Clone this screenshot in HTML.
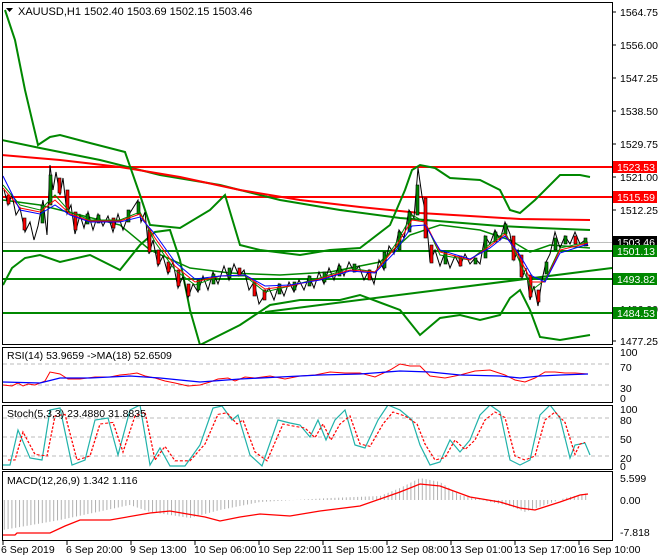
<!DOCTYPE html>
<html><head><meta charset="utf-8"><style>
html,body{margin:0;padding:0;background:#fff;}
svg{display:block;font-family:"Liberation Sans",sans-serif;}
</style></head><body>
<svg width="660" height="560" xmlns="http://www.w3.org/2000/svg">
<defs>
<clipPath id="cm"><rect x="3" y="3" width="609" height="341"/></clipPath>
<clipPath id="cr"><rect x="3" y="348" width="609" height="54"/></clipPath>
<clipPath id="cs"><rect x="3" y="406" width="609" height="63"/></clipPath>
<clipPath id="cd"><rect x="3" y="472" width="609" height="68"/></clipPath>
<pattern id="hp" width="3.8" height="10" patternUnits="userSpaceOnUse"><rect x="0" y="0" width="1" height="10" fill="#b0b0b0"/></pattern>
</defs>
<rect width="660" height="560" fill="#fff"/>
<rect x="2.5" y="2.5" width="610" height="342" fill="none" stroke="#000"/>
<rect x="2.5" y="347.5" width="610" height="55" fill="none" stroke="#000"/>
<rect x="2.5" y="405.5" width="610" height="64" fill="none" stroke="#000"/>
<rect x="2.5" y="471.5" width="610" height="69" fill="none" stroke="#000"/>

<g clip-path="url(#cm)" fill="none">
<line x1="3" x2="612" y1="242.5" y2="242.5" stroke="#c0c0c0"/>
<line x1="3" x2="612" y1="167" y2="167" stroke="#f00" stroke-width="2"/>
<line x1="3" x2="612" y1="197" y2="197" stroke="#f00" stroke-width="2"/>
<line x1="3" x2="612" y1="251" y2="251" stroke="#080" stroke-width="2"/>
<line x1="3" x2="612" y1="279" y2="279" stroke="#080" stroke-width="2"/>
<line x1="3" x2="612" y1="313" y2="313" stroke="#080" stroke-width="2"/>
<line x1="265" y1="312" x2="612" y2="268" stroke="#080" stroke-width="2"/>
<polyline stroke="#080" stroke-width="2" points="2,140 40,148 100,160 160,175 220,185 280,200 340,210 400,218 450,222 500,226 540,228 590,230"/>
<polyline stroke="#f00" stroke-width="2" points="2,155 60,160 120,167 180,177 240,190 300,200 360,207 420,213 470,216 520,219 590,220"/>
<polyline stroke="#080" stroke-width="2" points="5,10 15,40 25,90 38,145 50,137 60,135 90,143 125,152 140,195 150,225 180,228 210,210 225,195 240,245 260,250 300,255 330,250 360,248 390,225 405,190 412,170 420,165 435,168 450,178 480,180 500,190 510,210 520,213 535,200 560,175 580,175 590,177"/>
<polyline stroke="#080" stroke-width="2" points="3,285 12,268 25,258 40,255 60,262 90,255 120,270 140,245 155,232 170,230 180,260 190,310 200,345 240,325 270,305 300,300 340,300 360,295 400,310 420,335 440,318 460,315 480,320 500,315 510,298 520,290 530,310 540,337 560,340 590,335"/>
<polyline stroke="#080" stroke-width="1.5" points="3,200 40,205 80,215 120,225 150,250 190,268 230,273 280,275 330,272 380,262 410,235 440,225 480,230 510,240 530,252 550,245 590,248"/>
<polyline stroke="#000" stroke-width="1" points="4,190 8,205 12,195 16,215 20,208 25,232 30,222 34,240 38,226 43,200 47,235 50,165 53,190 56,172 60,195 63,178 67,214 71,205 75,234 80,215 84,228 88,212 93,230 98,214 103,226 108,216 113,232 118,214 123,230 128,216 133,208 138,200 141,222 145,212 149,254 153,240 158,266 163,256 168,274 173,262 178,288 183,276 188,298 193,284 198,292 203,276 208,290 213,272 218,284 224,266 229,280 234,264 239,276 244,270 249,290 254,282 259,304 264,296 269,288 274,300 279,284 284,296 289,282 294,292 299,280 304,290 309,276 314,288 319,272 324,284 329,268 334,280 339,264 344,276 349,262 354,272 359,266 364,280 369,270 374,284 379,260 384,270 389,246 394,254 399,230 404,238 409,210 414,218 418,168 422,196 426,214 430,262 435,250 440,266 445,252 450,268 455,256 460,266 465,254 470,264 475,258 480,264 485,236 490,244 495,230 500,240 505,222 510,234 514,260 518,250 522,278 526,268 530,300 534,286 538,306 542,280 546,262 550,254 555,232 560,248 565,236 570,244 575,232 580,244 585,240 588,246"/>
<g stroke="#000" stroke-width="0.6">
<rect x="7" y="195" width="3" height="9" fill="#f00"/><rect x="23" y="218" width="3" height="12" fill="#f00"/><rect x="41" y="205" width="3" height="18" fill="#080"/><rect x="49" y="175" width="3" height="30" fill="#080"/><rect x="58" y="178" width="3" height="15" fill="#f00"/><rect x="66" y="190" width="3" height="20" fill="#f00"/><rect x="74" y="212" width="3" height="18" fill="#f00"/><rect x="86" y="214" width="3" height="10" fill="#080"/><rect x="97" y="215" width="3" height="8" fill="#080"/><rect x="112" y="218" width="3" height="10" fill="#f00"/><rect x="127" y="210" width="3" height="12" fill="#080"/><rect x="137" y="202" width="3" height="12" fill="#080"/><rect x="148" y="230" width="3" height="22" fill="#f00"/><rect x="157" y="250" width="3" height="14" fill="#f00"/><rect x="167" y="262" width="3" height="10" fill="#f00"/><rect x="177" y="270" width="3" height="16" fill="#f00"/><rect x="187" y="284" width="3" height="12" fill="#f00"/><rect x="197" y="280" width="3" height="10" fill="#080"/><rect x="212" y="274" width="3" height="10" fill="#080"/><rect x="228" y="268" width="3" height="10" fill="#080"/><rect x="238" y="268" width="3" height="8" fill="#f00"/><rect x="253" y="282" width="3" height="14" fill="#f00"/><rect x="263" y="290" width="3" height="10" fill="#f00"/><rect x="278" y="284" width="3" height="10" fill="#080"/><rect x="293" y="282" width="3" height="8" fill="#080"/><rect x="308" y="276" width="3" height="10" fill="#080"/><rect x="323" y="272" width="3" height="10" fill="#080"/><rect x="338" y="266" width="3" height="10" fill="#080"/><rect x="353" y="264" width="3" height="8" fill="#080"/><rect x="368" y="270" width="3" height="10" fill="#f00"/><rect x="383" y="252" width="3" height="16" fill="#080"/><rect x="398" y="232" width="3" height="18" fill="#080"/><rect x="408" y="212" width="3" height="20" fill="#080"/><rect x="416" y="185" width="3" height="30" fill="#080"/><rect x="424" y="198" width="3" height="40" fill="#f00"/><rect x="430" y="245" width="3" height="18" fill="#f00"/><rect x="444" y="252" width="3" height="12" fill="#080"/><rect x="459" y="256" width="3" height="10" fill="#f00"/><rect x="474" y="258" width="3" height="6" fill="#080"/><rect x="484" y="236" width="3" height="22" fill="#080"/><rect x="494" y="232" width="3" height="10" fill="#080"/><rect x="504" y="224" width="3" height="10" fill="#080"/><rect x="512" y="236" width="3" height="24" fill="#f00"/><rect x="520" y="255" width="3" height="22" fill="#f00"/><rect x="529" y="275" width="3" height="22" fill="#f00"/><rect x="537" y="290" width="3" height="12" fill="#f00"/><rect x="545" y="262" width="3" height="12" fill="#080"/><rect x="554" y="238" width="3" height="12" fill="#080"/><rect x="564" y="236" width="3" height="8" fill="#080"/><rect x="574" y="236" width="3" height="8" fill="#f00"/><rect x="584" y="238" width="3" height="8" fill="#080"/>
</g>
<polyline stroke="#080" stroke-width="1" points="3,185 20,205 40,210 55,195 70,212 90,220 120,220 140,212 155,242 175,270 195,285 220,276 245,276 265,292 290,286 320,278 350,268 375,272 395,245 412,215 425,222 440,255 470,260 490,244 505,232 518,258 532,290 545,280 560,248 588,242"/>
<polyline stroke="#f00" stroke-width="1" points="3,188 20,208 40,212 55,200 70,214 90,221 120,221 140,214 155,238 175,266 195,282 220,276 245,275 265,289 290,286 320,279 350,270 375,272 395,248 412,220 425,222 440,252 470,260 490,246 505,234 518,255 532,282 545,282 560,250 588,243"/>
<polyline stroke="#00f" stroke-width="1" points="3,176 20,210 40,214 55,205 70,215 90,222 120,222 140,217 155,234 175,262 195,279 220,276 245,275 265,286 290,285 320,280 350,271 375,273 395,252 412,226 425,225 440,250 470,259 490,248 505,236 518,252 532,276 545,282 560,253 588,244"/>
</g>
<path d="M6 8 L13 8 L9.5 12 Z" fill="#000"/>
<text x="18" y="15" font-size="11" fill="#000">XAUUSD,H1  1502.40 1503.69 1502.15 1503.46</text>

<g font-size="10.5" fill="#000" stroke="#000">
<line x1="612" x2="616" y1="12" y2="12"/><line x1="612" x2="616" y1="45" y2="45"/><line x1="612" x2="616" y1="78" y2="78"/><line x1="612" x2="616" y1="111" y2="111"/><line x1="612" x2="616" y1="144" y2="144"/><line x1="612" x2="616" y1="177" y2="177"/><line x1="612" x2="616" y1="210" y2="210"/><line x1="612" x2="616" y1="309" y2="309"/><line x1="612" x2="616" y1="341" y2="341"/>
</g>
<g font-size="10.5" fill="#000">
<text x="620" y="16">1564.75</text><text x="620" y="49">1556.00</text><text x="620" y="82">1547.25</text><text x="620" y="115">1538.50</text><text x="620" y="148">1529.75</text><text x="620" y="181">1521.00</text><text x="620" y="214">1512.25</text><text x="620" y="313">1486.00</text><text x="620" y="345">1477.25</text>
</g>
<rect x="613" y="161" width="44" height="12" fill="#f00"/><text x="617" y="171" font-size="10.5" fill="#fff">1523.53</text>
<rect x="613" y="191" width="44" height="12" fill="#f00"/><text x="617" y="201" font-size="10.5" fill="#fff">1515.59</text>
<rect x="613" y="236" width="44" height="12" fill="#000"/><text x="617" y="246" font-size="10.5" fill="#fff">1503.46</text>
<rect x="613" y="245" width="44" height="12" fill="#080"/><text x="617" y="255" font-size="10.5" fill="#fff">1501.13</text>
<rect x="613" y="273" width="44" height="12" fill="#080"/><text x="617" y="283" font-size="10.5" fill="#fff">1493.82</text>
<rect x="613" y="307" width="44" height="12" fill="#080"/><text x="617" y="317" font-size="10.5" fill="#fff">1484.53</text>

<g clip-path="url(#cr)" fill="none">
<line x1="3" x2="612" y1="364" y2="364" stroke="#bbb" stroke-dasharray="4,3"/>
<line x1="3" x2="612" y1="385" y2="385" stroke="#bbb" stroke-dasharray="4,3"/>
<polyline stroke="#f00" points="3,385 12,386 18,383 23,386 28,384 35,385 45,381 50,372 55,373 60,374 68,379 80,379 95,377 110,377 120,375 130,374 137,373 145,376 155,378 165,381 175,383 188,386 200,385 210,382 218,379 228,378 235,381 245,377 255,378 270,376 285,379 300,376 315,375 330,372 345,373 360,373 375,377 390,370 400,364 410,366 420,366 430,376 445,378 460,375 475,371 490,370 505,375 515,380 525,382 535,378 545,372 555,372 565,373 575,373 588,374"/>
<polyline stroke="#00f" stroke-width="1.3" points="3,382 40,383 60,378 90,378 130,376 160,378 200,382 240,379 280,377 320,375 360,374 400,371 430,372 460,375 500,376 520,378 540,376 560,375 588,374"/>
</g>
<text x="7" y="359" font-size="10.5">RSI(14) 53.9659  -&gt;MA(18) 52.6509</text>
<g font-size="10.5" fill="#000"><text x="620" y="356">100</text><text x="620" y="371">70</text><text x="620" y="392">30</text><text x="620" y="402">0</text></g>

<g clip-path="url(#cs)" fill="none">
<line x1="3" x2="612" y1="418" y2="418" stroke="#bbb" stroke-dasharray="4,3"/>
<line x1="3" x2="612" y1="437" y2="437" stroke="#bbb" stroke-dasharray="4,3"/>
<line x1="3" x2="612" y1="456" y2="456" stroke="#bbb" stroke-dasharray="4,3"/>
<polyline id="sk" stroke="#20b2aa" stroke-width="1.2" points="3,465 10,465 18,430 30,458 42,460 50,410 60,408 72,465 85,460 95,420 108,418 118,455 130,410 140,405 150,465 160,448 170,466 185,466 200,445 213,408 222,406 232,420 238,415 250,455 262,466 278,420 290,423 300,425 310,437 318,420 326,440 335,420 345,410 355,445 365,448 378,420 388,405 400,410 412,420 420,445 430,465 440,462 450,440 460,452 470,440 480,415 490,405 500,412 510,460 520,465 530,460 540,415 550,405 560,418 570,458 575,445 585,443 590,455"/>
<g transform="translate(5,88) scale(1,0.8)"><polyline stroke="#f00" stroke-width="1.3" stroke-dasharray="3,2" points="3,465 10,465 18,430 30,458 42,460 50,410 60,408 72,465 85,460 95,420 108,418 118,455 130,410 140,405 150,465 160,448 170,466 185,466 200,445 213,408 222,406 232,420 238,415 250,455 262,466 278,420 290,423 300,425 310,437 318,420 326,440 335,420 345,410 355,445 365,448 378,420 388,405 400,410 412,420 420,445 430,465 440,462 450,440 460,452 470,440 480,415 490,405 500,412 510,460 520,465 530,460 540,415 550,405 560,418 570,458 575,445 580,443"/></g>
</g>
<text x="7" y="417" font-size="10.5">Stoch(5,3,3) 23.4880 31.8835</text>
<g font-size="10.5" fill="#000"><text x="620" y="413">100</text><text x="620" y="424">80</text><text x="620" y="443">50</text><text x="620" y="462">20</text><text x="620" y="470">0</text></g>

<g clip-path="url(#cd)">
<polygon fill="url(#hp)" points="3,500 3,530 60,520 130,505 150,512 190,518 220,510 260,502 330,498 380,496 400,488 420,478 440,482 460,495 490,502 510,506 525,512 545,505 565,498 588,493 588,500"/>
<polyline fill="none" stroke="#f00" stroke-width="1.3" points="3,535 15,535 17,533 50,533 65,526 80,520 110,520 150,513 170,511 205,517 220,521 240,517 260,514 290,516 320,511 360,506 400,492 420,484 440,486 470,497 500,502 520,508 535,510 560,502 580,495 588,494"/>
</g>
<text x="7" y="484" font-size="10.5">MACD(12,26,9) 1.342 1.116</text>
<g font-size="10.5" fill="#000"><text x="620" y="482">5.599</text><text x="620" y="504">0.00</text><text x="620" y="536">-7.818</text></g>

<g stroke="#000"><line x1="3" x2="3" y1="541" y2="545"/><line x1="67" x2="67" y1="541" y2="545"/><line x1="131" x2="131" y1="541" y2="545"/><line x1="195" x2="195" y1="541" y2="545"/><line x1="259" x2="259" y1="541" y2="545"/><line x1="323" x2="323" y1="541" y2="545"/><line x1="387" x2="387" y1="541" y2="545"/><line x1="451" x2="451" y1="541" y2="545"/><line x1="515" x2="515" y1="541" y2="545"/><line x1="579" x2="579" y1="541" y2="545"/></g>
<g font-size="10.5" fill="#000">
<text x="1" y="553">6 Sep 2019</text><text x="66" y="553">6 Sep 20:00</text><text x="130" y="553">9 Sep 13:00</text><text x="194" y="553">10 Sep 06:00</text><text x="258" y="553">10 Sep 22:00</text><text x="322" y="553">11 Sep 15:00</text><text x="386" y="553">12 Sep 08:00</text><text x="450" y="553">13 Sep 01:00</text><text x="514" y="553">13 Sep 17:00</text><text x="578" y="553">16 Sep 10:00</text>
</g>
</svg>
</body></html>
